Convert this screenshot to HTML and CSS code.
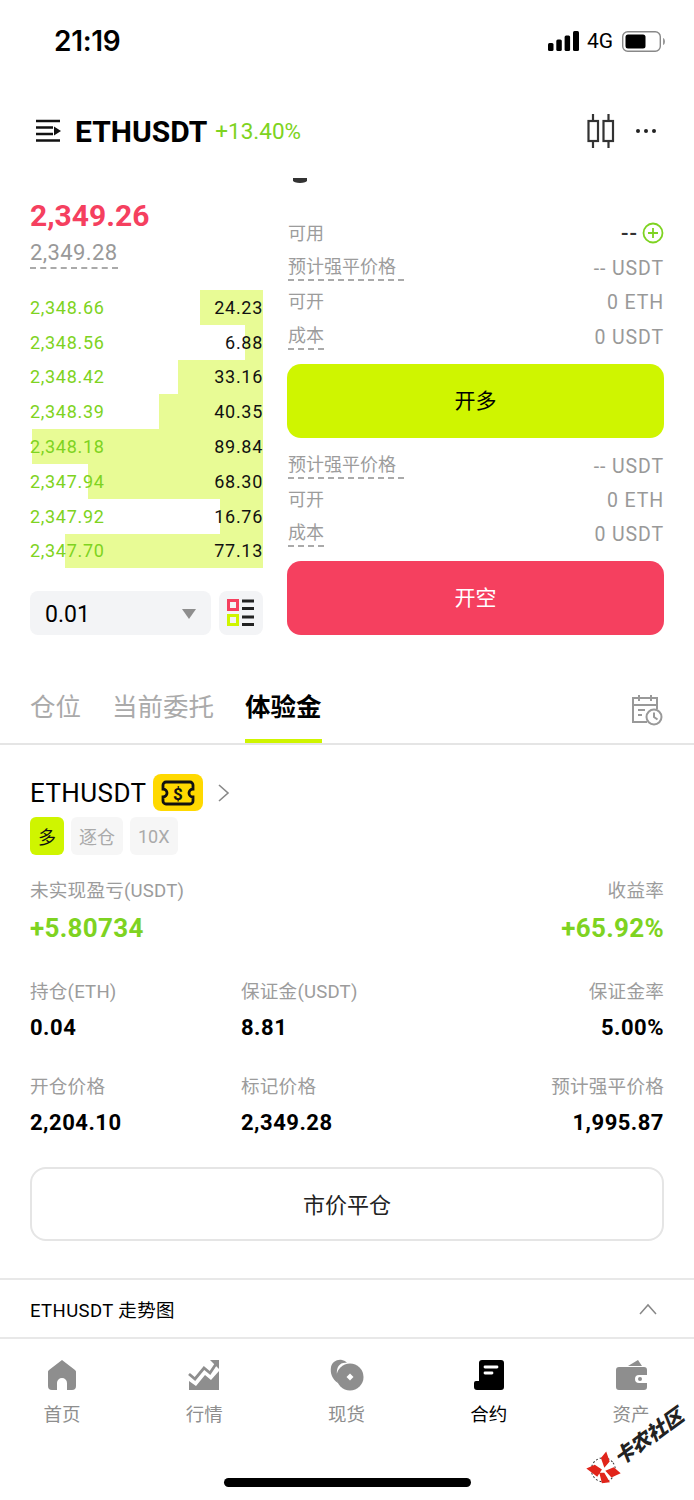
FILE: index.html
```html
<!DOCTYPE html>
<html lang="zh-CN">
<head>
    <meta charset="UTF-8">
    <meta name="viewport" content="width=device-width, initial-scale=1.0">
    <title>ETHUSDT</title>
    <link rel="stylesheet" href="styles.css">
</head>
<body>
<div class="page">

    <!-- Status bar -->
    <div class="status">
        <span class="time">21:19</span>
        <div class="status-right">
            <svg width="31" height="20" viewBox="0 0 31 20"><rect x="0" y="12" width="5.500" height="8" rx="1.500"/><rect x="8.300" y="8.500" width="5.500" height="11.500" rx="1.500"/><rect x="16.600" y="4.500" width="5.500" height="15.500" rx="1.500"/><rect x="25" y="0" width="6" height="20" rx="1.500"/></svg>
            <span class="net">4G</span>
            <svg width="44" height="21" viewBox="0 0 44 21"><rect x="0.700" y="0.700" width="37.600" height="19.600" rx="5" fill="none" stroke="#888" stroke-width="1.400"/><rect x="3.500" y="3.500" width="20" height="14" rx="2.500"/><path d="M41 7c1.500.5 2 2 2 3.500s-.5 3-2 3.500z" fill="#999"/></svg>
        </div>
    </div>

    <!-- Header -->
    <div class="header">
        <svg class="menu-icon" width="26" height="24" viewBox="0 0 26 24"><path d="M1 2h24M1 8.500h17M1 15h17M1 21.500h24" stroke="#111" stroke-width="2.400" fill="none"/><path d="M19 7.500l7 4.500-7 4.500z" fill="#111"/></svg>
        <span class="symbol">ETHUSDT</span>
        <span class="change">+13.40%</span>
        <svg class="candle-icon" width="28" height="34" viewBox="0 0 28 34"><path d="M6 0v34M21.500 0v34" stroke="#333" stroke-width="2.200"/><rect x="1.500" y="7" width="9.500" height="20" fill="#fff" stroke="#333" stroke-width="2.200"/><rect x="16.500" y="7" width="9.500" height="20" fill="#fff" stroke="#333" stroke-width="2.200"/></svg>
        <div class="dots"><i></i><i></i><i></i></div>
    </div>

    <div class="peek"></div>

    <!-- Order book and order form -->
    <div class="trade">
        <div class="book">
            <div class="last-price">2,349.26</div>
            <div class="mark-price"><span>2,349.28</span></div>
            <div class="rows">
                <div class="row"><div class="bar" style="width:63px"></div><span class="price">2,348.66</span><span class="qty">24.23</span></div>
                <div class="row"><div class="bar" style="width:18px"></div><span class="price">2,348.56</span><span class="qty">6.88</span></div>
                <div class="row"><div class="bar" style="width:85px"></div><span class="price">2,348.42</span><span class="qty">33.16</span></div>
                <div class="row"><div class="bar" style="width:104px"></div><span class="price">2,348.39</span><span class="qty">40.35</span></div>
                <div class="row"><div class="bar" style="width:231px"></div><span class="price">2,348.18</span><span class="qty">89.84</span></div>
                <div class="row"><div class="bar" style="width:175px"></div><span class="price">2,347.94</span><span class="qty">68.30</span></div>
                <div class="row"><div class="bar" style="width:43px"></div><span class="price">2,347.92</span><span class="qty">16.76</span></div>
                <div class="row"><div class="bar" style="width:198px"></div><span class="price">2,347.70</span><span class="qty">77.13</span></div>
            </div>
            <div class="book-tools">
                <div class="step-select"><span>0.01</span><i class="caret"></i></div>
                <div class="layout-btn">
                    <svg width="28" height="28" viewBox="0 0 28 28"><rect x="1.500" y="1.500" width="9" height="9" fill="none" stroke="#f5405f" stroke-width="3"/><rect x="1.500" y="16.500" width="9" height="9" fill="none" stroke="#cff500" stroke-width="3"/><path d="M15 2h12M15 9.500h12M15 18h12M15 25.500h12" stroke="#222" stroke-width="2.800"/></svg>
                </div>
            </div>
        </div>

        <div class="form">
            <div class="line">
                <span class="lab">可用</span>
                <span class="avail"><b>--</b>
                    <svg width="22" height="22" viewBox="0 0 22 22"><circle cx="11" cy="11" r="9.500" fill="none" stroke="#7ed321" stroke-width="1.800"/><path d="M11 6v10M6 11h10" stroke="#7ed321" stroke-width="1.800"/></svg>
                </span>
            </div>
            <div class="line"><span class="lab dash wide">预计强平价格</span><span class="val">-- USDT</span></div>
            <div class="line"><span class="lab">可开</span><span class="val">0 ETH</span></div>
            <div class="line"><span class="lab dash">成本</span><span class="val">0 USDT</span></div>
            <div class="action long">开多</div>
            <div class="line first"><span class="lab dash wide">预计强平价格</span><span class="val">-- USDT</span></div>
            <div class="line"><span class="lab">可开</span><span class="val">0 ETH</span></div>
            <div class="line"><span class="lab dash">成本</span><span class="val">0 USDT</span></div>
            <div class="action short">开空</div>
        </div>
    </div>

    <!-- Tabs -->
    <div class="tabs">
        <span class="tab">仓位</span>
        <span class="tab">当前委托</span>
        <span class="tab active">体验金</span>
        <svg class="history" width="32" height="32" viewBox="0 0 32 32"><path d="M16 28H2V4h24v11M2 11h24M8 1v6M20 1v6M7 16h7M7 21h4" fill="none" stroke="#999" stroke-width="2"/><circle cx="23" cy="23" r="7.500" fill="#fff" stroke="#999" stroke-width="2"/><path d="M23 18.500V23l3.500 2.500" fill="none" stroke="#999" stroke-width="2"/></svg>
    </div>

    <!-- Position -->
    <div class="position">
        <div class="pos-title">
            <span class="pos-name">ETHUSDT</span>
            <span class="coupon">
                <svg width="34" height="26" viewBox="0 0 34 26"><path d="M5 2h24a3 3 0 0 1 3 3v4a4 4 0 0 0 0 8v4a3 3 0 0 1-3 3H5a3 3 0 0 1-3-3v-4a4 4 0 0 0 0-8V5a3 3 0 0 1 3-3z" fill="none" stroke="#111" stroke-width="2.800"/><text x="17" y="19.500" text-anchor="middle" class="coupon-sign">$</text></svg>
            </span>
            <svg class="chev" width="14" height="20" viewBox="0 0 14 20"><path d="M2 2l9 8-9 8" fill="none" stroke="#888" stroke-width="1.600"/></svg>
        </div>
        <div class="tags">
            <span class="tag side">多</span>
            <span class="tag">逐仓</span>
            <span class="tag">10X</span>
        </div>

        <div class="stat-row pnl">
            <div class="stat"><div class="stat-lab">未实现盈亏(USDT)</div><div class="stat-big">+5.80734</div></div>
            <div class="stat end"><div class="stat-lab">收益率</div><div class="stat-big">+65.92%</div></div>
        </div>
        <div class="stat-row">
            <div class="stat"><div class="stat-lab">持仓(ETH)</div><div class="stat-val">0.04</div></div>
            <div class="stat"><div class="stat-lab">保证金(USDT)</div><div class="stat-val">8.81</div></div>
            <div class="stat end"><div class="stat-lab">保证金率</div><div class="stat-val">5.00%</div></div>
        </div>
        <div class="stat-row">
            <div class="stat"><div class="stat-lab">开仓价格</div><div class="stat-val">2,204.10</div></div>
            <div class="stat"><div class="stat-lab">标记价格</div><div class="stat-val">2,349.28</div></div>
            <div class="stat end"><div class="stat-lab">预计强平价格</div><div class="stat-val">1,995.87</div></div>
        </div>

        <div class="close-btn">市价平仓</div>
    </div>

    <!-- Chart toggle -->
    <div class="chart-bar">
        <span>ETHUSDT 走势图</span>
        <svg width="18" height="12" viewBox="0 0 18 12"><path d="M1 11l8-9 8 9" fill="none" stroke="#888" stroke-width="1.500"/></svg>
    </div>

    <!-- Bottom nav -->
    <div class="nav">
        <div class="nav-item">
            <svg width="32" height="32" viewBox="0 0 32 32"><path d="M16 1l13 10a3 3 0 0 1 1 3v13a4 4 0 0 1-4 4h-5v-7a5 5 0 0 0-10 0v7H6a4 4 0 0 1-4-4V14a3 3 0 0 1 1-3z" fill="#8e8e8e"/></svg>
            <span>首页</span>
        </div>
        <div class="nav-item">
            <svg width="32" height="32" viewBox="0 0 32 32"><path d="M1 31V22l7 5 9-11 6 5 8-9v19z" fill="#8e8e8e"/><path d="M1 15l6 5 9-11 6 5 6-9" fill="none" stroke="#8e8e8e" stroke-width="2.800"/><path d="M22 1h9v9z" fill="#8e8e8e"/></svg>
            <span>行情</span>
        </div>
        <div class="nav-item">
            <svg width="34" height="32" viewBox="0 0 34 32"><path d="M8 24C2 20 0 14 1 8c1-5 6-8 11-7 2 .4 4 1.500 5 3-7-1-11 4-10 12 .2 3 .5 6 1 8z" fill="#8e8e8e"/><circle cx="20" cy="18" r="13.500" fill="#8e8e8e"/><path d="M20 14.500l3.500 3.500-3.500 3.500-3.500-3.500z" fill="#fff"/></svg>
            <span>现货</span>
        </div>
        <div class="nav-item current">
            <svg width="32" height="32" viewBox="0 0 32 32"><path d="M9 1h19a3 3 0 0 1 3 3v24a3 3 0 0 1-3 3H4a3 3 0 0 1-3-3v-4a2 2 0 0 1 2-2h3V4a3 3 0 0 1 3-3z" fill="#000"/><path d="M12 8h12M12 14h7" stroke="#fff" stroke-width="2.800" stroke-linecap="round"/></svg>
            <span>合约</span>
        </div>
        <div class="nav-item">
            <svg width="34" height="32" viewBox="0 0 34 32"><path d="M14 7l10-6 4 6z" fill="#8e8e8e"/><path d="M5 8h25a3 3 0 0 1 3 3v5h-8a3 3 0 0 0 0 8h8v4a3 3 0 0 1-3 3H5a3 3 0 0 1-3-3V11a3 3 0 0 1 3-3z" fill="#8e8e8e"/><circle cx="26" cy="20" r="2" fill="#8e8e8e"/></svg>
            <span>资产</span>
        </div>
    </div>

    <div class="home-bar"></div>

    <!-- Forum watermark over the screenshot -->
    <div class="watermark">
        <svg width="28" height="34" viewBox="0 0 28 34"><circle cx="14" cy="17" r="12" fill="#fff" stroke="#333" stroke-width="1" stroke-dasharray="2 2"/><path d="M1 6l9 2 3 8-8 3zM27 4l-3 10-8 2 3-10zM5 27l4-10 4 3-1 11zM26 30l-10-2-1-9 9 2z" fill="#e1251b"/></svg>
        <span class="wm-text">卡农社区</span>
    </div>
</div>
</body>
</html>
```

FILE: styles.css
```css
* {
    box-sizing: border-box;
}
body {
    margin: 0;
    background: #fff;
    color: #000;
    font-family: Roboto, "Noto Sans CJK SC", sans-serif;
}
.page {
    position: relative;
    width: 694px;
    height: 1500px;
    overflow: hidden;
}

/* status bar */
.status {
    height: 82px;
    display: flex;
    align-items: center;
    justify-content: space-between;
    padding: 0 28px 0 54px;
}
.time {
    font-family: Inter, sans-serif;
    font-size: 28px;
    font-weight: 600;
    letter-spacing: -0.3px;
}
.status-right {
    display: flex;
    align-items: center;
}
.net {
    font-size: 21px;
    margin: 0 9px 0 8px;
}

/* header */
.header {
    height: 96px;
    padding: 2px 38px 0 35px;
    display: flex;
    align-items: center;
}
.symbol {
    font-size: 30px;
    font-weight: 700;
    margin-left: 14px;
}
.change {
    font-size: 22.500px;
    color: #7ed321;
    margin-left: 8px;
}
.candle-icon {
    margin-left: auto;
}
.dots {
    display: flex;
    gap: 4px;
    margin-left: 21px;
}
.dots i {
    width: 4px;
    height: 4px;
    border-radius: 50%;
    background: #222;
}
.peek {
    width: 14px;
    height: 5px;
    margin-left: 293px;
    background: #333;
    border-radius: 0 0 50% 50%;
}

/* order book + form */
.trade {
    display: flex;
    padding: 0 30px;
    gap: 24px;
}
.book {
    width: 233px;
    flex: none;
}
.last-price {
    margin-top: 15px;
    font-size: 30px;
    line-height: 36px;
    font-weight: 700;
    color: #f5405f;
}
.mark-price {
    margin-top: 4px;
    font-size: 22px;
    line-height: 29px;
    letter-spacing: 0.4px;
    color: #999;
}
.mark-price span {
    display: inline-block;
    border-bottom: 2px dashed #aaa;
}
.rows {
    margin-top: 21px;
}
.row {
    position: relative;
    height: 34.800px;
    display: flex;
    align-items: center;
    justify-content: space-between;
    font-size: 18px;
    letter-spacing: 0.7px;
}
.bar {
    position: absolute;
    top: 0;
    right: 0;
    bottom: 0;
    background: #e8fb95;
}
.price {
    position: relative;
    color: #7ed321;
}
.qty {
    position: relative;
    color: #111;
}
.book-tools {
    margin-top: 23px;
    display: flex;
    justify-content: space-between;
}
.step-select {
    width: 181px;
    height: 44px;
    padding: 2px 15px 0;
    display: flex;
    align-items: center;
    justify-content: space-between;
    background: #f3f4f6;
    border-radius: 8px;
    font-size: 23px;
}
.caret {
    width: 0;
    height: 0;
    border-left: 7px solid transparent;
    border-right: 7px solid transparent;
    border-top: 10px solid #8e8e8e;
}
.layout-btn {
    width: 44px;
    height: 44px;
    display: flex;
    align-items: center;
    justify-content: center;
    background: #f3f4f6;
    border-radius: 8px;
}
.form {
    flex: 1;
    padding-top: 33px;
}
.line {
    height: 34.300px;
    display: flex;
    align-items: center;
    justify-content: space-between;
    padding-left: 1px;
}
.line.first {
    margin-top: 10px;
}
.lab {
    font-size: 18px;
    line-height: 25px;
    color: #9c9c9c;
}
.lab.dash {
    border-bottom: 2px dashed #aaa;
}
.lab.wide {
    padding-right: 8px;
}
.val {
    padding-top: 2px;
    font-size: 19.500px;
    letter-spacing: 0.9px;
    color: #999;
}
.avail {
    display: flex;
    align-items: center;
    gap: 4px;
}
.avail b {
    font-size: 22px;
    font-weight: 500;
    letter-spacing: 1px;
    color: #333;
}
.action {
    height: 74px;
    margin-top: 11px;
    padding-bottom: 4px;
    border-radius: 14px;
    display: flex;
    align-items: center;
    justify-content: center;
    font-size: 21px;
}
.long {
    background: #cff500;
}
.short {
    background: #f5405f;
    color: #fff;
    margin-top: 10px;
}

/* tabs */
.tabs {
    margin-top: 41px;
    height: 69px;
    padding: 0 30px;
    display: flex;
    align-items: flex-start;
    gap: 31px;
    border-bottom: 2px solid #e5e5e5;
    font-size: 25.500px;
}
.tab {
    height: 67px;
    padding-top: 12px;
    line-height: 38px;
    color: #aaa;
}
.tab.active {
    color: #000;
    font-weight: 700;
    border-bottom: 4px solid #cff500;
}
.history {
    margin-left: auto;
    margin-top: 18px;
    margin-right: 1px;
}

/* position */
.position {
    padding: 29px 30px 0;
}
.pos-title {
    display: flex;
    align-items: center;
    height: 37px;
}
.pos-name {
    font-size: 26px;
    letter-spacing: 0.4px;
}
.coupon {
    width: 50px;
    height: 37px;
    margin-left: 7px;
    display: flex;
    align-items: center;
    justify-content: center;
    background: #ffd900;
    border-radius: 8px;
}
.coupon-sign {
    font-family: Roboto, sans-serif;
    font-size: 17px;
    font-weight: 700;
    fill: #111;
}
.chev {
    margin-left: 14px;
}
.tags {
    margin-top: 6px;
    display: flex;
    gap: 7px;
}
.tag {
    height: 38px;
    padding: 0 8px;
    display: flex;
    align-items: center;
    background: #f6f6f6;
    border-radius: 6px;
    font-size: 18px;
    color: #aaa;
}
.tag.side {
    background: #cff500;
    color: #111;
}
.stat-row {
    display: flex;
    margin-top: 23px;
    height: 72px;
}
.stat-row.pnl {
    margin-top: 23px;
    height: 78px;
    justify-content: space-between;
}
.stat {
    width: 211px;
}
.stat.end {
    margin-left: auto;
    text-align: right;
}
.stat-lab {
    font-size: 18.600px;
    line-height: 26px;
    letter-spacing: 0.2px;
    color: #9c9c9c;
}
.stat-big {
    margin-top: 7px;
    font-size: 26px;
    line-height: 34px;
    font-weight: 700;
    letter-spacing: 0.3px;
    color: #7ed321;
}
.stat-val {
    margin-top: 8px;
    font-size: 22px;
    line-height: 30px;
    font-weight: 700;
    letter-spacing: 0.5px;
}
.close-btn {
    margin-top: 21px;
    height: 74px;
    padding-bottom: 2px;
    display: flex;
    align-items: center;
    justify-content: center;
    border: 2px solid #e5e5e5;
    border-radius: 16px;
    font-size: 22px;
    color: #222;
}

/* chart toggle */
.chart-bar {
    margin-top: 37px;
    height: 61px;
    padding: 0 37px 0 30px;
    display: flex;
    align-items: center;
    justify-content: space-between;
    border-top: 2px solid #e8e8e8;
    border-bottom: 2px solid #e8e8e8;
    font-size: 18.500px;
    letter-spacing: 0.4px;
}

/* bottom nav */
.nav {
    padding: 20px 33px 0 32px;
    display: flex;
    justify-content: space-between;
}
.nav-item {
    width: 60px;
    display: flex;
    flex-direction: column;
    align-items: center;
    gap: 11px;
    font-size: 18.500px;
    line-height: 26px;
    color: #8e8e8e;
}
.nav-item.current {
    color: #000;
}
.home-bar {
    position: absolute;
    left: 224px;
    bottom: 13px;
    width: 247px;
    height: 9px;
    border-radius: 5px;
    background: #000;
}

/* watermark */
.watermark {
    position: absolute;
    left: 592px;
    top: 1461px;
    display: flex;
    align-items: center;
    gap: 2px;
    transform: rotate(-36deg);
    transform-origin: left center;
}
.wm-text {
    font-size: 20px;
    line-height: 24px;
    font-weight: 900;
    font-style: italic;
    color: #222;
    white-space: nowrap;
}
```
